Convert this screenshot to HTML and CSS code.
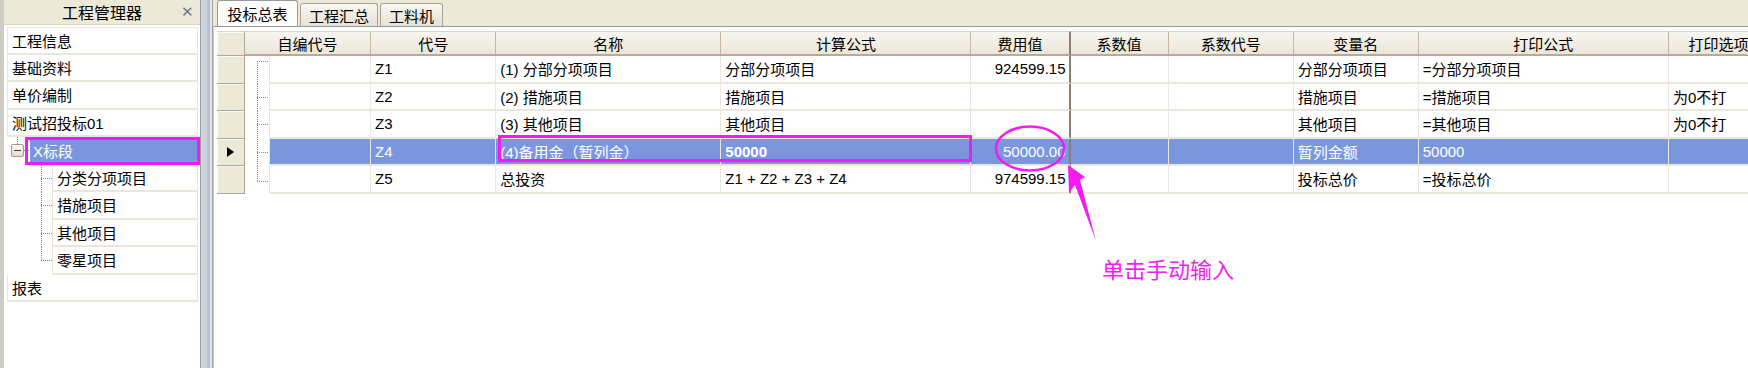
FILE: index.html
```html
<!DOCTYPE html>
<html lang="zh-CN">
<head>
    <meta charset="UTF-8">
    <title>投标总表</title>
    <link rel="stylesheet" href="styles.css">
</head>
<body>
    <div class="app">
        <div class="side">
            <div class="side-head">
                <span></span>
                <span class="side-title">工程管理器</span>
                <span class="side-close">✕</span>
            </div>
            <div class="tree">
                <div class="node first">工程信息</div>
                <div class="node">基础资料</div>
                <div class="node">单价编制</div>
                <div class="node">测试招投标01</div>
                <div class="group">
                    <div class="toggle-area">
                        <span class="tbox"></span>
                        <span class="dash"></span>
                    </div>
                    <div class="group-label">X标段</div>
                </div>
                <div class="child"><span class="conn"></span><span class="child-label">分类分项项目</span></div>
                <div class="child"><span class="conn"></span><span class="child-label">措施项目</span></div>
                <div class="child"><span class="conn"></span><span class="child-label">其他项目</span></div>
                <div class="child last"><span class="conn"></span><span class="child-label">零星项目</span></div>
                <div class="node">报表</div>
            </div>
        </div>

        <div class="splitter"></div>

        <div class="main">
            <div class="tabs">
                <div class="tab active">投标总表</div>
                <div class="tab t2">工程汇总</div>
                <div class="tab t3">工料机</div>
            </div>
            <div class="tab-body">
                <table class="grid">
                    <colgroup>
                        <col style="width:28px">
                        <col style="width:25px">
                        <col style="width:101px">
                        <col style="width:125px">
                        <col style="width:225px">
                        <col style="width:250px">
                        <col style="width:99px">
                        <col style="width:98px">
                        <col style="width:125px">
                        <col style="width:125px">
                        <col style="width:250px">
                        <col style="width:100px">
                    </colgroup>
                    <thead>
                        <tr>
                            <th class="ind"></th>
                            <th colspan="2">自编代号</th>
                            <th>代号</th>
                            <th>名称</th>
                            <th>计算公式</th>
                            <th class="fee">费用值</th>
                            <th>系数值</th>
                            <th>系数代号</th>
                            <th>变量名</th>
                            <th>打印公式</th>
                            <th>打印选项</th>
                        </tr>
                    </thead>
                    <tbody>
                        <tr>
                            <td class="ind"></td>
                            <td class="tree top"></td>
                            <td></td>
                            <td>Z1</td>
                            <td>(1) 分部分项项目</td>
                            <td>分部分项项目</td>
                            <td class="fee num">924599.15</td>
                            <td></td>
                            <td></td>
                            <td>分部分项项目</td>
                            <td>=分部分项项目</td>
                            <td></td>
                        </tr>
                        <tr>
                            <td class="ind"></td>
                            <td class="tree mid"></td>
                            <td></td>
                            <td>Z2</td>
                            <td>(2) 措施项目</td>
                            <td>措施项目</td>
                            <td class="fee num"></td>
                            <td></td>
                            <td></td>
                            <td>措施项目</td>
                            <td>=措施项目</td>
                            <td>为0不打</td>
                        </tr>
                        <tr>
                            <td class="ind"></td>
                            <td class="tree mid"></td>
                            <td></td>
                            <td>Z3</td>
                            <td>(3) 其他项目</td>
                            <td>其他项目</td>
                            <td class="fee num"></td>
                            <td></td>
                            <td></td>
                            <td>其他项目</td>
                            <td>=其他项目</td>
                            <td>为0不打</td>
                        </tr>
                        <tr class="sel">
                            <td class="ind"><span class="cursor"></span></td>
                            <td class="tree mid"></td>
                            <td></td>
                            <td>Z4</td>
                            <td>(4)备用金（暂列金）</td>
                            <td class="strong">50000</td>
                            <td class="fee num">50000.00</td>
                            <td></td>
                            <td></td>
                            <td>暂列金额</td>
                            <td>50000</td>
                            <td></td>
                        </tr>
                        <tr>
                            <td class="ind"></td>
                            <td class="tree end"></td>
                            <td></td>
                            <td>Z5</td>
                            <td>总投资</td>
                            <td>Z1 + Z2 + Z3 + Z4</td>
                            <td class="fee num">974599.15</td>
                            <td></td>
                            <td></td>
                            <td>投标总价</td>
                            <td>=投标总价</td>
                            <td></td>
                        </tr>
                    </tbody>
                </table>
            </div>
        </div>
    </div>

    <!-- annotations drawn over the screenshot -->
    <svg class="marks" width="1748" height="368" viewBox="0 0 1748 368">
        <rect x="26.5" y="138.5" width="172" height="25" fill="none" stroke="#f21cf2" stroke-width="3"/>
        <rect x="499.5" y="136.5" width="471" height="24" fill="none" stroke="#f21cf2" stroke-width="3"/>
        <ellipse cx="1030" cy="148.5" rx="34" ry="22" fill="none" stroke="#f21cf2" stroke-width="2.5"/>
        <polygon points="1068,165 1085,177 1080,180 1096,241 1075,185 1069,193" fill="#f21cf2"/>
    </svg>
    <div class="note">单击手动输入</div>
</body>
</html>
```

FILE: styles.css
```css
* {
    box-sizing: border-box;
}

html, body {
    margin: 0;
}

body {
    width: 1748px;
    height: 368px;
    overflow: hidden;
    position: relative;
    background: #fff;
    color: #000;
    font-family: "Liberation Sans", "Noto Sans CJK SC", sans-serif;
    font-size: 15px;
}

.app {
    display: flex;
    height: 368px;
}

/* left project tree */
.side {
    width: 200px;
    flex: none;
    border-left: 4px solid #cfccc5;
    background: #fff;
    display: flex;
    flex-direction: column;
}

.side-head {
    height: 25px;
    background: #ece9d8;
    border-bottom: 1px solid #d9d3c3;
    display: grid;
    grid-template-columns: 1fr auto 1fr;
    align-items: center;
    font-size: 16px;
}

.side-close {
    justify-self: end;
    padding-right: 6px;
    color: #7a7a7a;
    font-size: 15px;
}

.tree {
    padding: 2px 2px 0 3px;
}

.node {
    height: 27.5px;
    display: flex;
    align-items: center;
    padding-left: 4px;
    border: 1px solid #ebe6da;
    border-top: none;
    border-bottom-width: 2px;
}

.node.first {
    border-top: 1px solid #ebe6da;
}

.group {
    height: 27.5px;
    display: flex;
    align-items: center;
}

.toggle-area {
    width: 23px;
    height: 100%;
    display: flex;
    align-items: center;
    padding-left: 4px;
    background: repeating-linear-gradient(#8a8a8a 0 1px, transparent 1px 2px) 10px 0 / 1px 8px no-repeat;
}

.tbox {
    width: 13px;
    height: 13px;
    border: 1px solid #a59a86;
    border-radius: 2px;
    background: linear-gradient(#fbfaf6, #e4dccb);
    position: relative;
}

.tbox::after {
    content: "";
    position: absolute;
    left: 2px;
    right: 2px;
    top: 5px;
    height: 1px;
    background: #444;
}

.dash {
    width: 6px;
    height: 1px;
    background: repeating-linear-gradient(to right, #8a8a8a 0 1px, transparent 1px 2px);
}

.group-label {
    flex: 1;
    height: 24px;
    background: #7a97de;
    color: #fff;
    padding-left: 3px;
    display: flex;
    align-items: center;
}

.child {
    height: 27.5px;
    display: flex;
    margin-left: 34px;
}

.conn {
    width: 11px;
    flex: none;
    background:
        repeating-linear-gradient(#8a8a8a 0 1px, transparent 1px 2px) 0 0 / 1px 100% no-repeat,
        repeating-linear-gradient(to right, #8a8a8a 0 1px, transparent 1px 2px) 0 50% / 11px 1px no-repeat;
}

.child.last .conn {
    background:
        repeating-linear-gradient(#8a8a8a 0 1px, transparent 1px 2px) 0 0 / 1px 50% no-repeat,
        repeating-linear-gradient(to right, #8a8a8a 0 1px, transparent 1px 2px) 0 50% / 11px 1px no-repeat;
}

.child-label {
    flex: 1;
    display: flex;
    align-items: center;
    padding-left: 4px;
    border-left: 1px solid #ebe6da;
    border-right: 1px solid #ebe6da;
    border-bottom: 2px solid #ebe6da;
}

.splitter {
    width: 13px;
    flex: none;
    background: linear-gradient(to right, #9c9c9c 0 1px, #cad3dd 1px 7px, #b5c2cf 7px 10px, #e6e6e6 10px 12px, #a3a3a3 12px 13px);
}

/* right pane */
.main {
    flex: 1;
    min-width: 0;
    overflow: hidden;
    display: flex;
    flex-direction: column;
}

.tabs {
    height: 26px;
    flex: none;
    background: #ece9d8;
    display: flex;
    align-items: flex-end;
    gap: 2px;
    padding-left: 4px;
}

.tab {
    width: 81px;
    height: 23px;
    display: flex;
    align-items: center;
    justify-content: center;
    border: 1px solid #a8a395;
    border-bottom: none;
    border-radius: 3px 3px 0 0;
    background: linear-gradient(#f8f6ef, #e6e1d2);
}

.tab.active {
    height: 26px;
    background: #fcfcfb;
    border-color: #939b9c;
}

.tab.t2 {
    width: 78px;
}

.tab.t3 {
    width: 63px;
}

.tab-body {
    flex: 1;
    border-top: 1px solid #929b9c;
    border-left: 1px solid #c9c9c9;
    padding: 4px 0 0 3px;
    background: #fff;
}

.grid {
    border-collapse: separate;
    border-spacing: 0;
    table-layout: fixed;
    width: 1552px;
}

.grid th {
    height: 25px;
    padding: 0;
    font-weight: normal;
    text-align: center;
    background: linear-gradient(#f8f6f0, #ebe6d8);
    border-top: 1px solid #dcd5c6;
    border-right: 1px solid #c5b6a3;
    border-bottom: 2px solid #b9a996;
}

.grid td {
    height: 27.5px;
    padding: 0 4px;
    white-space: nowrap;
    overflow: hidden;
    border-right: 1px solid #ebe7dd;
    border-bottom: 2px solid #ebe7dd;
}

.grid .ind {
    padding: 0;
    background: #ece9d8;
    border-right: 1px solid #aca899;
    border-bottom: 1px solid #aca899;
    box-shadow: inset 1px 1px #fbfaf6;
}

.grid .fee {
    border-right: 2px solid #8e7e72;
}

.grid .num {
    text-align: right;
    padding-right: 3px;
}

.grid .tree {
    padding: 0;
    border-bottom: none;
    background:
        repeating-linear-gradient(#8a8a8a 0 1px, transparent 1px 2px) 12px 0 / 1px 100% no-repeat,
        repeating-linear-gradient(to right, #8a8a8a 0 1px, transparent 1px 2px) 12px 50% / 11px 1px no-repeat;
}

.grid .tree.top {
    background:
        repeating-linear-gradient(#8a8a8a 0 1px, transparent 1px 2px) 12px 5px / 1px 100% no-repeat,
        repeating-linear-gradient(to right, #8a8a8a 0 1px, transparent 1px 2px) 12px 5px / 11px 1px no-repeat;
}

.grid .tree.end {
    background:
        repeating-linear-gradient(#8a8a8a 0 1px, transparent 1px 2px) 12px 0 / 1px 55% no-repeat,
        repeating-linear-gradient(to right, #8a8a8a 0 1px, transparent 1px 2px) 12px 55% / 11px 1px no-repeat;
}

.sel td:not(.tree):not(.ind) {
    background: #7a97de;
    color: #fff;
}

.sel .strong {
    font-weight: bold;
}

.cursor {
    display: block;
    width: 0;
    height: 0;
    margin-left: 10px;
    border-left: 7px solid #000;
    border-top: 5.5px solid transparent;
    border-bottom: 5.5px solid transparent;
}

/* annotation layer */
.marks {
    position: absolute;
    top: 0;
    left: 0;
    pointer-events: none;
}

.note {
    position: absolute;
    left: 1102px;
    top: 255px;
    color: #f21cf2;
    font-family: "Noto Sans CJK SC", sans-serif;
    font-size: 22px;
    line-height: 26px;
}
```
